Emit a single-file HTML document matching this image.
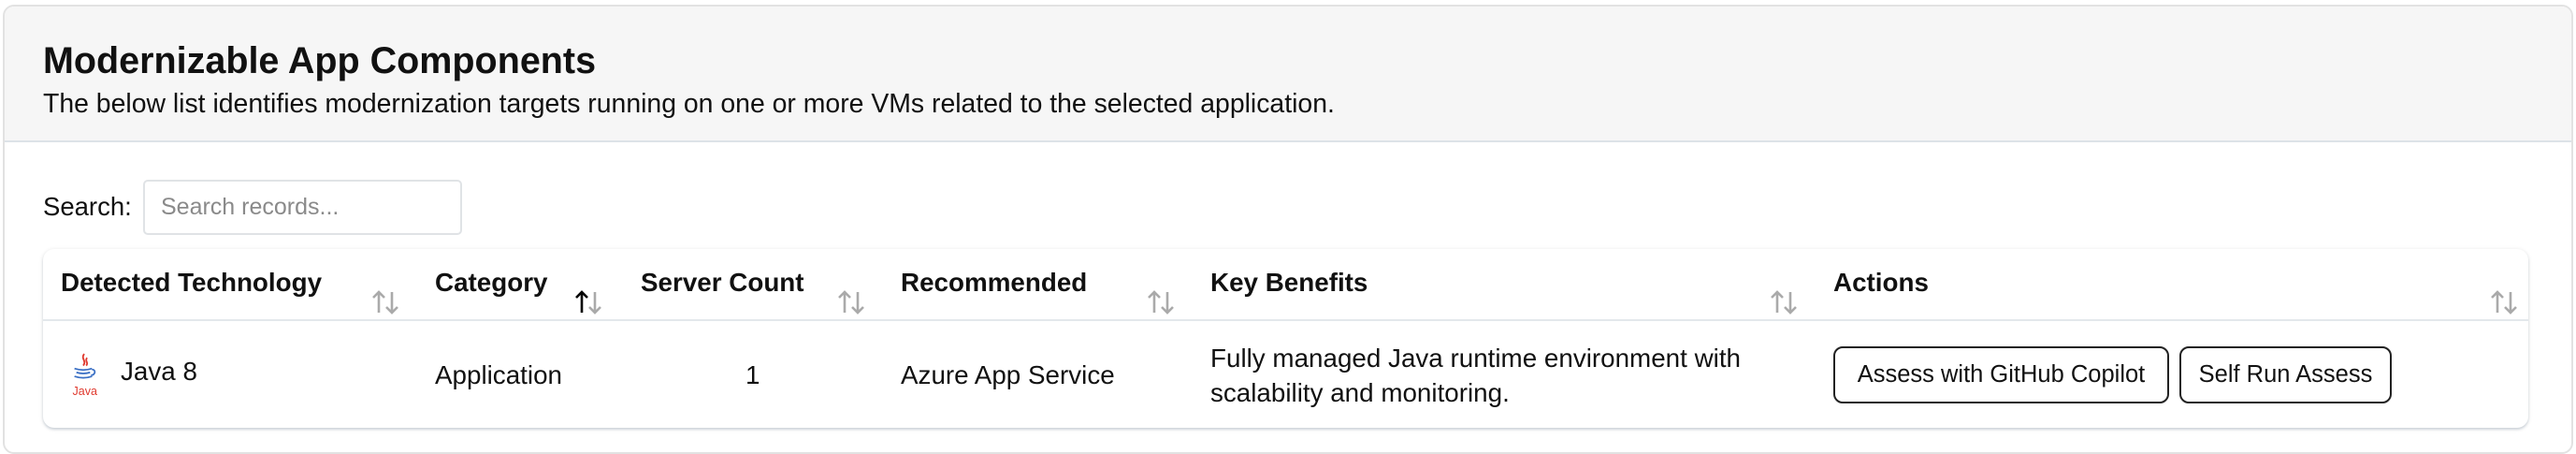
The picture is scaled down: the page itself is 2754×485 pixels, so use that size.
<!DOCTYPE html>
<html><head><style>
*{box-sizing:border-box;margin:0;padding:0}
body{width:2754px;height:466px;overflow:hidden;background:#fff;font-family:"Liberation Sans",Arial,sans-serif;color:#111;position:relative}
.card{position:absolute;left:3px;top:5px;width:2748px;height:480px;border:2px solid #e2e2e2;border-radius:12px;overflow:hidden}
.hdr{position:absolute;left:0;top:0;right:0;height:145px;background:#f6f6f6;border-bottom:2px solid #dde3e8}
.t{position:absolute;left:41px;top:36px;font-size:39.5px;font-weight:bold;white-space:nowrap}
.s{position:absolute;left:41px;top:88px;font-size:28.4px;white-space:nowrap}
.a{position:absolute;white-space:nowrap}
.input{position:absolute;left:153px;top:192px;width:341px;height:59px;border:2px solid #e0e3e6;border-radius:5px}
.tbl{position:absolute;left:46px;top:266px;width:2657px;height:191px;border-radius:12px;background:#fff;box-shadow:0 1px 5px rgba(0,0,0,.13),0 2px 2px rgba(180,195,210,.4)}
.th{font-size:27.8px;font-weight:bold;top:286px}
.sort{position:absolute;top:308px}
.td{font-size:27.8px}
.btn{position:absolute;top:370px;height:61px;border:2px solid #222;border-radius:10px;font-size:25.5px;line-height:57px;text-align:center}
</style></head><body>
<div class="card"><div class="hdr"><div class="t">Modernizable App Components</div><div class="s">The below list identifies modernization targets running on one or more VMs related to the selected application.</div></div></div>
<div class="a" style="left:46px;top:205px;font-size:27.5px">Search:</div>
<div class="input"></div>
<div class="a" style="left:172px;top:207px;font-size:25px;color:#8a8a8a">Search records...</div>
<div class="tbl"></div>
<div style="position:absolute;left:46px;top:341px;width:2657px;height:2px;background:#e3e8ec"></div>
<div class="a th" style="left:65px">Detected Technology</div>
<div class="a th" style="left:465px">Category</div>
<div class="a th" style="left:685px">Server Count</div>
<div class="a th" style="left:963px">Recommended</div>
<div class="a th" style="left:1294px">Key Benefits</div>
<div class="a th" style="left:1960px">Actions</div>
<svg width="0" height="0" style="position:absolute"><defs>
<g id="up"><path d="M8 26V4M2 10l6-6 6 6" fill="none" stroke-width="2.6"/></g>
<g id="dn"><path d="M22 4v22M16 20l6 6 6-6" fill="none" stroke-width="2.6"/></g></defs></svg>
<svg class="sort" style="left:397px" width="32" height="30"><use href="#up" stroke="#aaa"/><use href="#dn" stroke="#aaa"/></svg>
<svg class="sort" style="left:614px" width="32" height="30"><use href="#up" stroke="#000"/><use href="#dn" stroke="#aaa"/></svg>
<svg class="sort" style="left:895px" width="32" height="30"><use href="#up" stroke="#aaa"/><use href="#dn" stroke="#aaa"/></svg>
<svg class="sort" style="left:1226px" width="32" height="30"><use href="#up" stroke="#aaa"/><use href="#dn" stroke="#aaa"/></svg>
<svg class="sort" style="left:1892px" width="32" height="30"><use href="#up" stroke="#aaa"/><use href="#dn" stroke="#aaa"/></svg>
<svg class="sort" style="left:2662px" width="32" height="30"><use href="#up" stroke="#aaa"/><use href="#dn" stroke="#aaa"/></svg>
<svg style="position:absolute;left:72px;top:376px" width="34" height="50" viewBox="0 0 30 48">
<path d="M16 2c-4 5 3 7-1 12M19 6c-3 3 2 5-1 8" stroke="#e03a2f" stroke-width="1.8" fill="none"/>
<path d="M6 17c6 2 12 2 18 0M8 21c5 1.5 9 1.5 14 0M6 25c6 2 12 2 18 0M24 18c4 0 4 5-1 6" stroke="#3a6fc4" stroke-width="1.7" fill="none"/>
<text x="4" y="44" font-size="12" fill="#e03a2f" font-family="Liberation Sans">Java</text></svg>
<div class="a td" style="left:129px;top:381px">Java 8</div>
<div class="a td" style="left:465px;top:385px">Application</div>
<div class="a td" style="left:797px;top:385px">1</div>
<div class="a td" style="left:963px;top:385px">Azure App Service</div>
<div class="a td" style="left:1294px;top:364px;line-height:37px">Fully managed Java runtime environment with<br>scalability and monitoring.</div>
<div class="btn" style="left:1960px;width:359px">Assess with GitHub Copilot</div>
<div class="btn" style="left:2330px;width:227px">Self Run Assess</div>
</body></html>
